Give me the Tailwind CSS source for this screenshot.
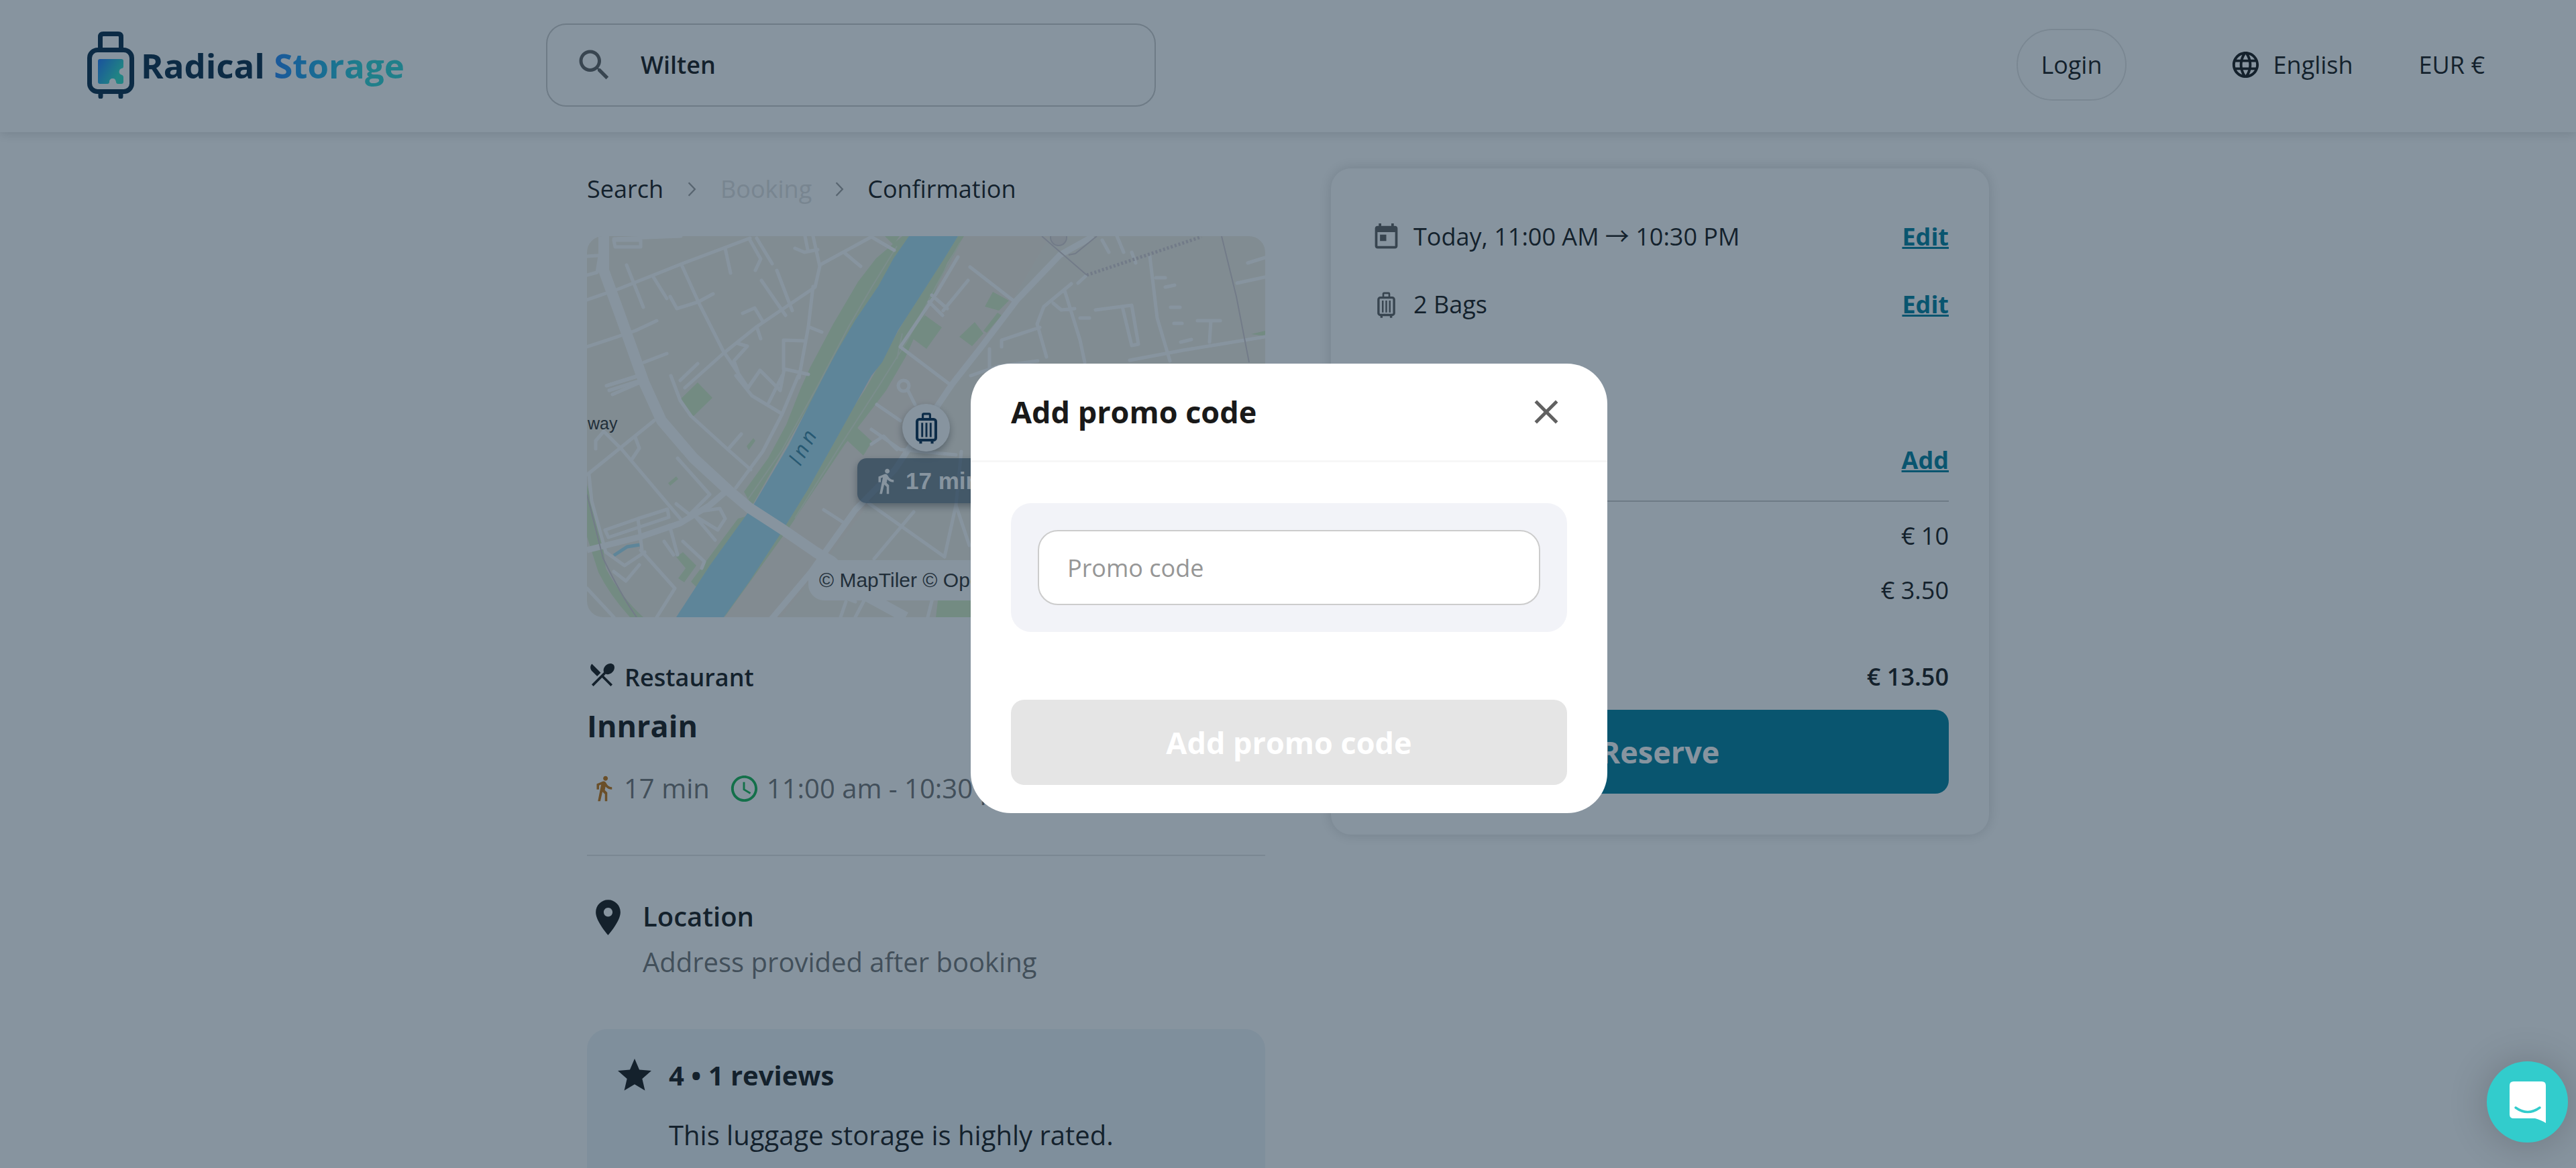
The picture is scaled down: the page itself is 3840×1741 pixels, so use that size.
<!DOCTYPE html>
<html lang="en">
<head>
    <meta charset="UTF-8">
    <meta name="viewport" content="width=device-width, initial-scale=1.0">
    <title>Radical Storage - Booking</title>
    <script src="https://cdn.jsdelivr.net/npm/@tailwindcss/browser@4"></script>
</head>
<body class="h-screen overflow-hidden bg-white font-['Open_Sans',sans-serif] text-[36px] leading-[54px] text-[#191919]">

    <!-- shared icons -->
    <svg class="hidden">
        <symbol id="walk" viewBox="0 0 24 24">
            <path d="M13.5 5.5c1.1 0 2-.9 2-2s-.9-2-2-2-2 .9-2 2 .9 2 2 2zM9.8 8.9L7 23h2.1l1.8-8 2.1 2v6h2v-7.5l-2.1-2 .6-3C14.8 12 16.8 13 19 13v-2c-1.9 0-3.5-1-4.3-2.4l-1-1.6c-.4-.6-1-1-1.7-1-.3 0-.5.1-.8.1L6 8.3V13h2V9.6l1.8-.7" fill="currentColor"/>
        </symbol>
        <symbol id="bag" viewBox="0 0 24 24">
            <g fill="none" stroke="currentColor">
                <path d="M9.6 6V3.2c0-.4.2-.6.6-.6h3.600c.4 0 .6.2.6.6V6" stroke-width="1.400"/>
                <rect x="5.800" y="6.200" width="12.400" height="13.800" rx="1.500" stroke-width="1.800"/>
                <path d="M9.200 8.500v9.500M12 8.500v9.500M14.800 8.500v9.500" stroke-width="1.300"/>
                <path d="M8.200 20.500v1.800M15.800 20.500v1.800" stroke-width="1.800"/>
            </g>
        </symbol>
        <symbol id="chevron" viewBox="0 0 12 20">
            <path d="M1.500 1l8.500 9-8.500 9" fill="none" stroke="currentColor" stroke-width="2.200"/>
        </symbol>
    </svg>

    <header class="flex h-[197px] items-center bg-white px-[130px] pb-1 shadow-[0_2px_16px_rgba(0,0,0,0.16)]">
        <a href="#" class="flex w-[684px] items-center gap-[10px]">
            <svg class="h-[100px] w-[70px]" viewBox="0 0 70 100">
                <defs>
                    <linearGradient id="mark" x1="0" y1="0.2" x2="1" y2="0.8">
                        <stop offset="0" stop-color="#2585f5"/>
                        <stop offset="0.8" stop-color="#31dfc8"/>
                    </linearGradient>
                </defs>
                <g fill="none" stroke="#092d4b" stroke-width="7" stroke-linecap="round">
                    <path d="M19.500 26V8q0-4.500 4.500-4.500h22q4.500 0 4.500 4.500v18"/>
                    <rect x="3.500" y="27.500" width="63" height="62" rx="12"/>
                    <path d="M20 92v5M50 92v5"/>
                </g>
                <path d="M18 41h33q3 0 3 3v8q0 3-3 3a5 5 0 0 0-1 9q4 1 4 4v7q0 3-3 3h-5q-3 0-3-3c-1-4-2-5-5-5s-5 2-5 5q0 3-3 3H19q-3 0-3-3V44q0-3 3-3z" fill="url(#mark)"/>
            </svg>
            <span class="text-[51px] font-bold leading-[60px] text-[#092d4b]">Radical <span class="bg-linear-to-r from-[#2585f5] to-[#31d5d5] to-70% bg-clip-text text-transparent">Storage</span></span>
        </a>

        <label class="flex h-[124px] w-[909px] items-center gap-[39px] rounded-[30px] border-2 border-[#cccccc] px-[40px]">
            <svg class="size-[60px] shrink-0" viewBox="0 0 24 24" fill="#616161">
                <path d="M15.500 14h-.79l-.28-.27C15.410 12.590 16 11.110 16 9.500 16 5.910 13.090 3 9.500 3S3 5.910 3 9.500 5.910 16 9.500 16c1.610 0 3.090-.59 4.230-1.570l.27.28v.79l5 4.990L20.490 19l-4.990-5zm-6 0C7.010 14 5 11.990 5 9.500S7.010 5 9.500 5 14 7.010 14 9.500 11.990 14 9.500 14z"/>
            </svg>
            <input type="text" aria-label="Search location" value="Wilten" class="w-full font-semibold outline-none">
        </label>

        <div class="ml-auto flex items-center">
            <button class="h-[107px] rounded-full border-2 border-[#e5e5e5] px-[34px]">Login</button>
            <button class="ml-[154px] flex items-center gap-[18px]">
                <svg class="size-[47px]" viewBox="0 0 24 24" fill="#191919">
                    <path d="M11.990 2C6.470 2 2 6.480 2 12s4.470 10 9.990 10C17.520 22 22 17.520 22 12S17.520 2 11.990 2zm6.930 6h-2.950c-.32-1.250-.78-2.450-1.380-3.560 1.840.63 3.370 1.910 4.330 3.560zM12 4.040c.83 1.200 1.480 2.530 1.910 3.960h-3.820c.43-1.430 1.080-2.760 1.910-3.960zM4.260 14C4.100 13.360 4 12.690 4 12s.1-1.360.26-2h3.380c-.08.66-.14 1.320-.14 2s.06 1.340.14 2H4.260zm.82 2h2.950c.32 1.250.78 2.450 1.380 3.560-1.840-.63-3.370-1.900-4.330-3.560zm2.950-8H5.080c.96-1.660 2.490-2.930 4.330-3.560C8.810 5.550 8.350 6.750 8.030 8zM12 19.960c-.83-1.200-1.480-2.530-1.910-3.960h3.820c-.43 1.430-1.080 2.760-1.910 3.960zM14.340 14H9.660c-.09-.66-.16-1.320-.16-2s.07-1.350.16-2h4.680c.09.65.16 1.320.16 2s-.07 1.340-.16 2zm.25 5.560c.6-1.110 1.060-2.310 1.380-3.560h2.950c-.96 1.650-2.490 2.930-4.330 3.560zM16.360 14c.08-.66.14-1.320.14-2s-.06-1.340-.14-2h3.380c.16.64.26 1.310.26 2s-.1 1.360-.26 2h-3.380z"/>
                </svg>
                English
            </button>
            <button class="ml-[98px] mr-[6px]">EUR €</button>
        </div>
    </header>

    <main class="mx-auto grid w-full max-w-[2090px] grid-cols-[1011fr_981fr] items-start gap-[98px] pt-[54px]">
        <section>
            <nav class="mb-[39px] flex h-[62px] items-center">
                <a href="#">Search</a>
                <svg class="mx-[36px] h-[22px] w-[13px] text-[#a0a0a0]"><use href="#chevron"/></svg>
                <span class="text-[#e0e0e0]">Booking</span>
                <svg class="mx-[35px] h-[22px] w-[13px] text-[#a0a0a0]"><use href="#chevron"/></svg>
                <a href="#">Confirmation</a>
            </nav>

            <div class="relative h-[568px] overflow-hidden rounded-[24px] bg-[#f3efe5]">
                <svg class="size-full" viewBox="0 0 1011 568" preserveAspectRatio="xMidYMid slice" fill="none">
                    <path d="M510 0h180L620 120 540 230 420 400 290 568H204L424 208z" fill="#f5ece3"/>
                    <!-- parks -->
                    <g fill="#d7ecc5">
                        <path d="M470 0L431 33 404 68 367 131 333 195 318 228 297 281 270 331 234 381 246 402 356 208 440 80 487 0z"/>
                        <path d="M225 421L155 515l8 8 80-107z"/>
                        <path d="M553 0h9l-25 40-26 60-36 80-29 50-62 81-83 124-96 133 20-53L415 228 510 60z"/>
                        <path d="M444 0h22l-9 13zM605 83l24 13-15 15-21-6zM504 118l25 18-23 32-24-18zM578 128l13 17-17 19-19-14zM612 114l6 4-22 26-5-3z"/>
                        <path d="M165 218l22 23-30 29-20-25zM400 283l25 23-13 21-28-26zM133 478l10-7 20 20-18 25-9-6 11-15zM121 368l12-10 3 4-12 10zM238 313l10-12 3 4-10 14z"/>
                        <path d="M523 543h90v25h-93zM990 146l21-5v8z"/>
                        <path d="M0 370l24 95 4 30q22 42 56 73H64Q34 535 17 501L0 448z"/>
                    </g>
                    <!-- river -->
                    <path d="M480 0L457 33 434 75 400 125 373 171 353 208 301 311 248 401 183 491 133 568H204L242 515 287 446 329 378 370 305 424 208 440 188 464 140 504 78 534 31 553 0z" fill="#ade0f2"/>
                    <path d="M40 476l20-13 19-3" stroke="#ade0f2" stroke-width="5"/>
                    <!-- paths along the banks -->
                    <path d="M462 15L425 75 390 135 343 225 290 320 238 395M556 10L520 75 478 155 436 222 376 315 310 420M470 145l-8 38" stroke="#e6f0d8" stroke-width="2"/>
                    <!-- streets -->
                    <g stroke="#fff" stroke-width="5" stroke-linejoin="round" stroke-linecap="round">
                        <path d="M0 95L49 78 142 41 243 3M0 165l72-24 32-15M142 45l24 53 37 73 37 55"/>
                        <path d="M146 226l57-51 50-40 87-59 7-31L337 0M347 43L424 1l34 20M384 25l24 20M59 43l25 63M99 61l20 32M206 18l8 37M253 3l23 38M243 6l16 28-8 17M283 51l23 60M260 66l36 52M337 75l-7 60-14 76M330 135l20 8"/>
                        <path d="M293 198v-43l30 1M294 198l36 8M240 226l18-26 30 30 6-32M85 188l34-13M29 223l43-13M33 230l44-14M166 98l-32 10-10-18M166 98l22-12M232 115l18-8 12 20M253 135l6 18M225 160l14 4-20 22 6 16M310 18l14 6 20-4M325 0l4 20"/>
                        <path d="M40 6h40v10H42zM0 30l30-2M0 58l15-4 4-24M40 4L140 0"/>
                        <path d="M553 31L521 85 467 165l74 56M571 46l67 52M568 66l-37 45M514 88l23 20M510 98l20 20M839 30l11 92 19 64M712 81l23 74 7 33M722 71L681 105l-10 26 14 49M618 165v-10l57-19M758 110l54-7M798 105l14 58 10-2-10-58M969 70l42-9M745 58l-13 12M695 100l12 10 20-2M735 122h14M848 62h14M862 76l14-3M870 106h14M875 130h12M885 158l16-4M910 126h34M930 126l-2 32M768 6l10 18M790 0l10 24M812 24l6 16M985 40l26-8"/>
                        <path d="M1 355l99-80M25 291l27 27 87 103M125 208l14 37 16 23 55 50 34 30M230 295l-20 23M315 208l-24 57-29 56-40 54M222 208l24 30 45 27M291 208l-20 40M165 190l-26 25M25 291l-12 14v12M72 300l6 16-12 18M32 222l44-14M38 236l46-20"/>
                        <path d="M135 331l48 54-30 30-20-16M3 355l4 40 21 76 28 20 30-20M80 468l51 57-27 43M27 438l49-17 44-14 2 12-90 30zM76 421l6 47M159 415l32 38M170 410l28-4 8 15-11 17-36-22M123 431l12 44M143 455l32 30-4 10M115 455l14 20M0 525l40 43M40 500l18 14 20-24"/>
                        <path d="M420 398l113 80 17-77 8-80M487 411l-59 70M353 408l28 18M432 251l35 24M424 288l43 30 83 8M424 310l18-12 20 20M489 251l-10-20M550 401l20 60M400 545l-30-12M420 530l-20 38M386 545l-8 23M520 520l-12 48"/>
                        <circle cx="472" cy="223" r="8"/>
                        <path d="M572 208l40-14 60-8M600 208v-40M809 185l80-15 122-20"/>
                    </g>
                    <g stroke="#fff" stroke-linejoin="round">
                        <path d="M25 0v51l27 74 33 93 26 57 48 56 51 47 32 27 51 33 48 33 24 14 55 53 55 30" stroke-width="16"/>
                        <path d="M0 468l80-20 59-20 44-27 27-23" stroke-width="9"/>
                        <path d="M755 0l-50 28-64 67-53 70-44 56-25 37-60 90-59 60-43 60-24 34-59 70" stroke-width="9"/>
                    </g>
                    <!-- railway -->
                    <g stroke="#d5ccd0" stroke-width="2">
                        <path d="M678 0l67 58M760 0l-32 26-10 2M946 0l22 90 19 98M0 385l24 95q26 54 50 88"/>
                        <circle cx="703" cy="2" r="12" fill="#eae3df"/>
                        <path d="M745 58L916 1" stroke-width="5" stroke-dasharray="3 3"/>
                    </g>
                    <text x="1" y="288" font-family="Liberation Sans" font-size="25" fill="#333">way</text>
                    <text transform="translate(318 344) rotate(-62)" font-family="Open Sans" font-style="italic" font-size="31" letter-spacing="5" fill="#3f88a5">Inn</text>
                </svg>

                <div class="absolute left-[470px] top-[250px] flex size-[71px] items-center justify-center rounded-full bg-white text-[#0b2f50] shadow-[0_5px_12px_rgba(0,0,0,0.35)]">
                    <svg class="size-[54px]"><use href="#bag"/></svg>
                </div>
                <div class="absolute left-[403px] top-[331px] flex h-[67px] w-[204px] items-center gap-[9px] rounded-[14px] bg-[#0f2f4a]/55 pl-[21px] font-['Liberation_Sans',sans-serif] text-[35px] font-bold text-white shadow-[0_5px_12px_rgba(0,0,0,0.35)]">
                    <svg class="size-[42px]"><use href="#walk"/></svg>
                    17 min
                </div>
                <div class="absolute bottom-[25px] left-[330px] right-0 h-[60px] overflow-hidden whitespace-nowrap rounded-l-[24px] bg-white pl-[16px] font-['Liberation_Sans',sans-serif] text-[30px] leading-[60px] text-[#333]">© MapTiler © OpenStreetMap contributors</div>
            </div>

            <div class="mt-[63px] flex items-start gap-[11px] font-semibold">
                <svg class="size-[45px]" viewBox="0 0 24 24" fill="#191919">
                    <path d="M8.100 13.340l2.830-2.830L3.910 3.500c-1.560 1.560-1.560 4.090 0 5.660l4.190 4.180zm6.780-1.810c1.530.71 3.680.21 5.270-1.380 1.910-1.910 2.280-4.650.81-6.120-1.460-1.460-4.200-1.100-6.120.81-1.590 1.590-2.090 3.740-1.380 5.270L3.700 19.870l1.410 1.410L12 14.410l6.880 6.880 1.410-1.410L13.410 13l1.470-1.470z"/>
                </svg>
                Restaurant
            </div>
            <h1 class="mt-[11px] text-[45px] font-bold leading-[68px]">Innrain</h1>
            <div class="mt-[29px] flex items-center text-[40px] leading-[60px] text-[#757575]">
                <svg class="ml-[4px] mr-[9px] size-[42px] text-[#c47413]"><use href="#walk"/></svg>
                17 min
                <svg class="ml-[28px] mr-[10px] size-[47px]" viewBox="0 0 24 24" fill="#19b755">
                    <path d="M11.990 2C6.470 2 2 6.480 2 12s4.470 10 9.990 10C17.520 22 22 17.520 22 12S17.520 2 11.990 2zM12 20c-4.420 0-8-3.580-8-8s3.580-8 8-8 8 3.580 8 8-3.580 8-8 8zm.5-13H11v6l5.250 3.150.75-1.230-4.500-2.670z"/>
                </svg>
                11:00 am - 10:30 pm
            </div>

            <div class="mt-[69px] flex gap-[20px] border-t-2 border-[#e5e5e5] pt-[60px] text-[40px] leading-[60px]">
                <svg class="size-[63px] shrink-0" viewBox="0 0 24 24" fill="#191919">
                    <path d="M12 2C8.130 2 5 5.130 5 9c0 5.250 7 13 7 13s7-7.750 7-13c0-3.870-3.130-7-7-7zm0 9.500c-1.380 0-2.500-1.120-2.500-2.500s1.120-2.500 2.500-2.500 2.500 1.120 2.500 2.500-1.120 2.500-2.500 2.500z"/>
                </svg>
                <div>
                    <h2 class="font-semibold">Location</h2>
                    <p class="mt-[8px] text-[#757575]">Address provided after booking</p>
                </div>
            </div>

            <div class="mt-[70px] flex gap-[21px] rounded-[30px] bg-[#eef4f9] px-[41px] pb-[60px] pt-[39px] text-[40px] leading-[60px]">
                <svg class="size-[60px] shrink-0" viewBox="0 0 24 24" fill="#191919">
                    <path d="M12 17.270L18.180 21l-1.640-7.030L22 9.240l-7.190-.61L12 2 9.190 8.630 2 9.240l5.460 4.730L5.820 21z"/>
                </svg>
                <div>
                    <h2 class="font-bold">4 • 1 reviews</h2>
                    <p class="mt-[29px]">This luggage storage is highly rated.</p>
                </div>
            </div>
        </section>

        <aside class="rounded-[30px] bg-white px-[60px] pb-[61px] pt-[75px] shadow-[0_0_20px_rgba(0,0,0,0.16)]">
            <div class="flex items-center gap-[18px]">
                <svg class="size-[45px]" viewBox="0 0 24 24" fill="#616161">
                    <path d="M19 3h-1V1h-2v2H8V1H6v2H5c-1.110 0-1.990.9-1.990 2L3 19c0 1.100.89 2 2 2h14c1.100 0 2-.9 2-2V5c0-1.100-.9-2-2-2zm0 16H5V8h14v11zM7 10h5v5H7v-5z"/>
                </svg>
                <span>Today, 11:00 AM <span class="font-['Noto_Sans_CJK_JP',sans-serif] leading-none">→</span> 10:30 PM</span>
                <a href="#" class="ml-auto font-bold text-[#03819f] underline">Edit</a>
            </div>
            <div class="mt-[47px] flex items-center gap-[18px]">
                <svg class="size-[45px] text-[#616161]"><use href="#bag"/></svg>
                2 Bags
                <a href="#" class="ml-auto font-bold text-[#03819f] underline">Edit</a>
            </div>
            <div class="mt-[178px] flex justify-end border-b-2 border-[#cccccc] pb-[33px]">
                <a href="#" class="font-bold text-[#03819f] underline">Add</a>
            </div>
            <p class="mt-[24px] text-right">€ 10</p>
            <p class="mt-[27px] text-right">€ 3.50</p>
            <p class="mt-[75px] text-right font-semibold">€ 13.50</p>
            <button class="mt-[22px] h-[125px] w-full rounded-[20px] bg-[#03819f] text-[45px] font-bold text-white">Reserve</button>
        </aside>
    </main>

    <!-- promo code dialog -->
    <div class="fixed inset-0 flex items-center justify-center bg-[#0f293f]/50 pl-[3px] pt-[13px]">
        <div role="dialog" aria-labelledby="promoTitle" class="w-[949px] rounded-[60px] bg-white pb-[42px]">
            <div class="flex h-[147px] items-center justify-between border-b-3 border-[#f7f7f7] pl-[60px] pr-[61px]">
                <h2 id="promoTitle" class="text-[45px] font-bold leading-[68px]">Add promo code</h2>
                <button aria-label="Close">
                    <svg class="size-[60px]" viewBox="0 0 24 24" fill="#616161">
                        <path d="M19 6.410L17.590 5 12 10.590 6.410 5 5 6.410 10.590 12 5 17.590 6.410 19 12 13.410 17.590 19 19 17.590 13.410 12z"/>
                    </svg>
                </button>
            </div>
            <form class="px-[60px] pt-[61px]">
                <div class="rounded-[30px] bg-[#f2f3f8] p-[40px]">
                    <input type="text" aria-label="Promo code" placeholder="Promo code" class="block h-[112px] w-full rounded-[30px] border-2 border-[#cccccc] bg-white px-[42px] outline-none placeholder:text-[#969696]">
                </div>
                <button type="button" disabled class="mt-[101px] h-[127px] w-full rounded-[20px] bg-[#e5e5e5] text-[45px] font-bold text-white">Add promo code</button>
            </form>
        </div>
    </div>

    <!-- chat launcher -->
    <button aria-label="Open chat" class="fixed bottom-[38px] right-[12px] flex size-[121px] items-center justify-center rounded-full bg-[#32cccc] shadow-[0_2px_60px_rgba(0,0,0,0.2)]">
        <svg class="h-[62px] w-[54px]" viewBox="0 0 54 62">
            <path d="M6 0h42q6 0 6 6v56q-6-4-16-7H6q-6 0-6-6V6q0-6 6-6z" fill="#fff"/>
            <path d="M9 39q18 13 36 0" fill="none" stroke="#32cccc" stroke-width="3.500" stroke-linecap="round"/>
        </svg>
    </button>

</body>
</html>
